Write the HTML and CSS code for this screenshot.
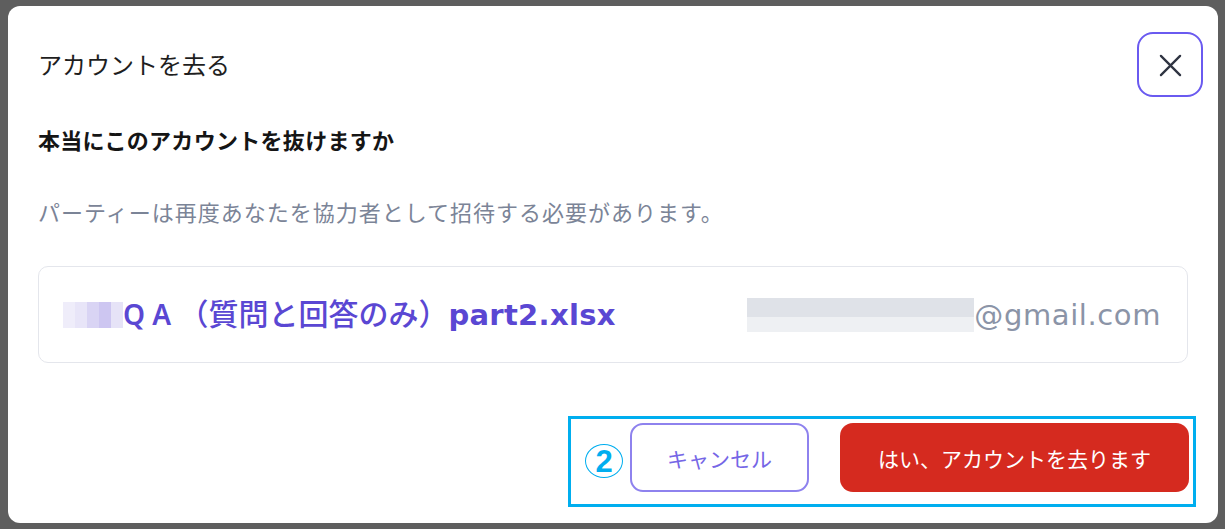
FILE: index.html
```html
<!DOCTYPE html>
<html lang="ja">
<head>
<meta charset="utf-8">
<title>アカウントを去る</title>
<link rel="stylesheet" href="styles.css">
</head>
<body>
<div class="dialog">
  <header class="head">
    <h1 class="title">アカウントを去る</h1>
    <button class="close" aria-label="閉じる">
      <svg width="24" height="24" viewBox="0 0 24 24"><path d="M2 2 L22 22 M22 2 L2 22" stroke="#2f3442" stroke-width="2.4" stroke-linecap="round" fill="none"/></svg>
    </button>
  </header>
  <h2 class="question">本当にこのアカウントを抜けますか</h2>
  <p class="desc">パーティーは再度あなたを協力者として招待する必要があります。</p>
  <div class="card">
    <div class="file">
      <span class="blur blur-file"><i></i><i></i><i></i><i></i><i></i></span>
      <span class="fname"><span class="qa">Q A </span><span class="cjk">（質問と回答のみ）</span><b class="lat">part2.xlsx</b></span>
    </div>
    <div class="mail">
      <span class="blur blur-mail"></span>
      <span class="addr">@gmail.com</span>
    </div>
  </div>
  <div class="foot">
    <div class="mark">
      <span class="num">2</span>
      <button class="btn cancel">キャンセル</button>
      <button class="btn ok">はい、アカウントを去ります</button>
    </div>
  </div>
</div>
</body>
</html>
```

FILE: styles.css
```css
* { box-sizing: border-box; }
html, body { margin: 0; height: 100%; }
body {
  background: #5e5e5e;
  padding: 6px 7px 6px 8px;
  font-family: "Noto Sans CJK JP", "Noto Sans", sans-serif;
}
.dialog {
  background: #fff;
  border-radius: 12px;
  height: 517px;
  padding: 26px 30px 16px 30px;
  display: flex;
  flex-direction: column;
}
.head {
  display: flex;
  align-items: center;
  justify-content: space-between;
  height: 65px;
  margin-right: -15px;
}
.title {
  margin: 0;
  font-size: 24px;
  font-weight: 400;
  color: #1e1e1e;
  line-height: 28px;
  padding-bottom: 2px;
}
.close {
  width: 66px;
  height: 65px;
  border: 2px solid #6a5af0;
  border-radius: 16px;
  background: #fff;
  display: flex;
  align-items: center;
  justify-content: center;
  padding: 0;
}
.close svg { width: 23px; height: 23px; margin-top: 2px; }
.question {
  margin: 27px 0 0;
  font-size: 22px;
  line-height: 30px;
  font-weight: 700;
  color: #151515;
  letter-spacing: 0.3px;
}
.desc {
  margin: 42px 0 0;
  font-size: 22px;
  line-height: 30px;
  color: #7b8497;
  letter-spacing: 1px;
}
.card {
  margin-top: 40px;
  height: 97px;
  border: 1px solid #e4e6ec;
  border-radius: 10px;
  display: flex;
  align-items: center;
  justify-content: space-between;
  padding: 0 26px 0 24px;
}
.file, .mail { display: flex; align-items: center; }
.fname {
  color: #5a47d3;
  white-space: pre;
  line-height: 36px;
}
.fname .qa {
  font-family: "Noto Sans", sans-serif;
  font-size: 28px;
  font-weight: 600;
}
.fname .lat {
  font-family: "DejaVu Sans", sans-serif;
  font-size: 29px;
  font-weight: 700;
  letter-spacing: 0.3px;
}
.fname .cjk {
  font-family: "Noto Sans CJK JP", sans-serif;
  font-size: 30px;
  font-weight: 500;
}
.blur { display: inline-block; }
.blur-file {
  display: flex;
  width: 60px;
  height: 26px;
  margin-right: 0;
}
.blur-file i { flex: 1; display: block; }
.blur-file i:nth-child(1) { background: #efedfa; }
.blur-file i:nth-child(2) { background: #e8e5f8; }
.blur-file i:nth-child(3) { background: #d9d4f4; }
.blur-file i:nth-child(4) { background: #cdc6f1; }
.blur-file i:nth-child(5) { background: #e6e3f7; }
.blur-mail {
  width: 227px;
  height: 34px;
  background: linear-gradient(#dfe2e8 0 55%, #eef0f3 55% 100%);
}
.addr {
  font-family: "DejaVu Sans", sans-serif;
  font-size: 29px;
  color: #8b94a7;
  letter-spacing: 0.6px;
}
.foot {
  margin-top: 53px;
  display: flex;
  justify-content: flex-end;
  margin-right: -8px;
}
.mark {
  border: 3px solid #00aeef;
  height: 91px;
  width: 628px;
  padding: 4px 4px 12px 14px;
  display: flex;
  align-items: flex-start;
}
.num {
  width: 38px;
  height: 34px;
  margin-top: 21px;
  margin-right: 7px;
  border: 1.3px solid #00aeef;
  border-radius: 50%;
  color: #00aeef;
  font-family: "Liberation Sans", sans-serif;
  font-weight: 700;
  font-size: 31px;
  line-height: 1;
  display: flex;
  align-items: center;
  justify-content: center;
}
.btn {
  height: 69px;
  border-radius: 13px;
  font-family: "Noto Sans CJK JP", sans-serif;
  font-size: 21px;
  padding: 0;
  cursor: pointer;
}
.cancel {
  width: 179px;
  background: #fff;
  border: 2px solid #8e82ee;
  color: #7566e6;
}
.ok {
  width: 349px;
  margin-left: 31px;
  background: #d52a1f;
  border: none;
  color: #fff;
}
```
